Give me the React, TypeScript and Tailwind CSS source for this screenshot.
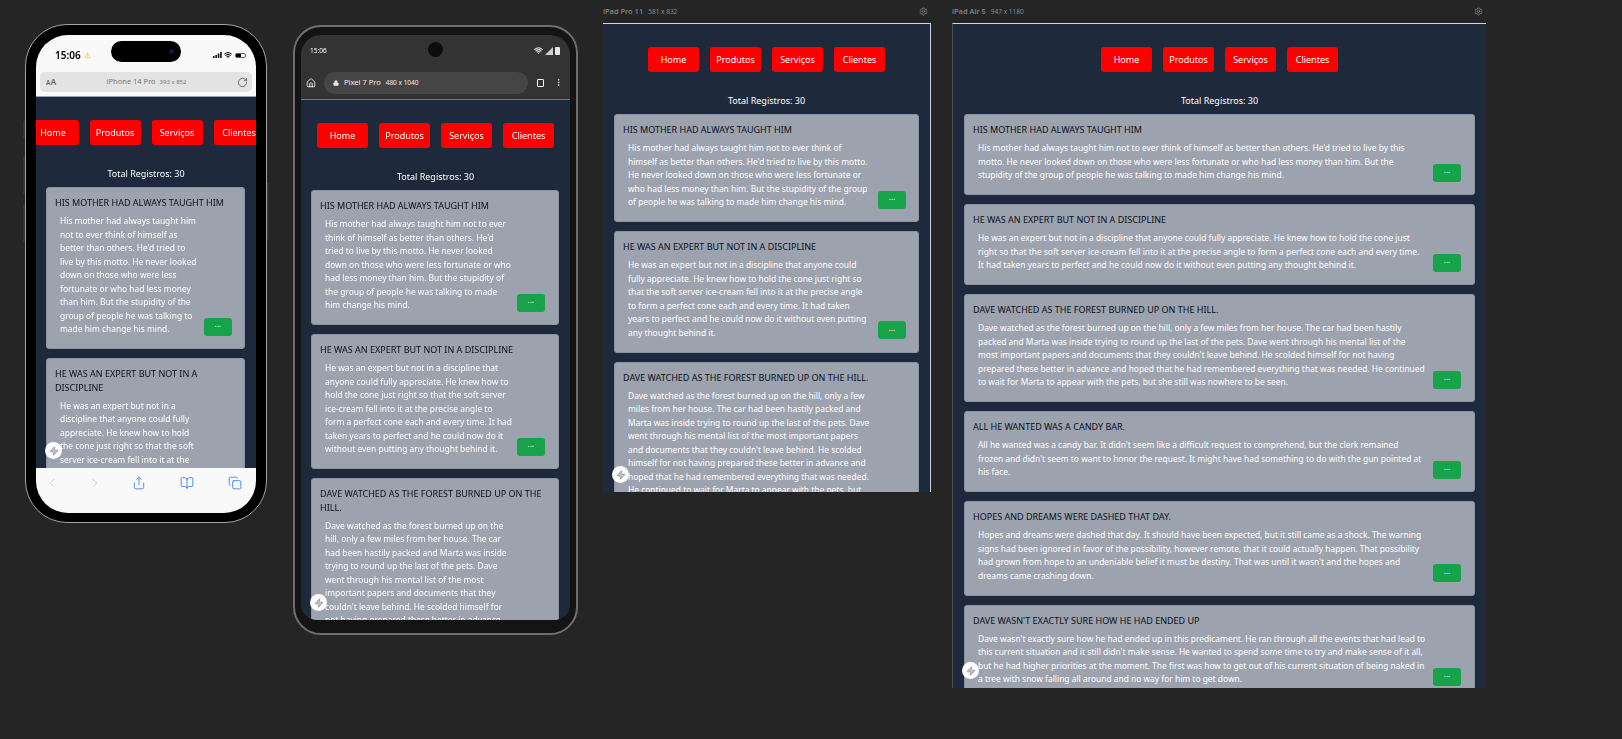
import { BookOpen, ChevronLeft, ChevronRight, Copy, Home, Lock, MoreVertical, RotateCw, Settings, Share, Wifi, Zap } from "lucide-react";
import { clsx } from "clsx";

const posts = [
  {
    title: "His mother had always taught him",
    body: "His mother had always taught him not to ever think of himself as better than others. He'd tried to live by this motto. He never looked down on those who were less fortunate or who had less money than him. But the stupidity of the group of people he was talking to made him change his mind.",
  },
  {
    title: "He was an expert but not in a discipline",
    body: "He was an expert but not in a discipline that anyone could fully appreciate. He knew how to hold the cone just right so that the soft server ice-cream fell into it at the precise angle to form a perfect cone each and every time. It had taken years to perfect and he could now do it without even putting any thought behind it.",
  },
  {
    title: "Dave watched as the forest burned up on the hill.",
    body: "Dave watched as the forest burned up on the hill, only a few miles from her house. The car had been hastily packed and Marta was inside trying to round up the last of the pets. Dave went through his mental list of the most important papers and documents that they couldn't leave behind. He scolded himself for not having prepared these better in advance and hoped that he had remembered everything that was needed. He continued to wait for Marta to appear with the pets, but she still was nowhere to be seen.",
  },
  {
    title: "All he wanted was a candy bar.",
    body: "All he wanted was a candy bar. It didn't seem like a difficult request to comprehend, but the clerk remained\n frozen and didn't seem to want to honor the request. It might have had something to do with the gun pointed at his face.",
  },
  {
    title: "Hopes and dreams were dashed that day.",
    body: "Hopes and dreams were dashed that day. It should have been expected, but it still came as a shock. The warning signs had been ignored in favor of the possibility, however remote, that it could actually happen. That possibility had grown from hope to an undeniable belief it must be destiny. That was until it wasn't and the hopes and dreams came crashing down.",
  },
  {
    title: "Dave wasn't exactly sure how he had ended up",
    body: "Dave wasn't exactly sure how he had ended up in this predicament. He ran through all the events that had lead to this current situation and it still didn't make sense. He wanted to spend some time to try and make sense of it all, but he had higher priorities at the moment. The first was how to get out of his current situation of being naked in a tree with snow falling all around and no way for him to get down.",
  },
];

const links = ["Home", "Produtos", "Serviços", "Clientes"];

function Site({ count, className, pad, cardPad, rowGap }: { count: number; className?: string; pad: string; cardPad: string; rowGap: string }) {
  return (
    <div className={clsx("relative overflow-hidden bg-[#1e293b] font-['Noto_Sans',sans-serif] text-[8.42px] leading-[13.5px]", className)}>
      <div className="flex justify-center gap-[11px] pt-[23px]">
        {links.map((l) => (
          <a key={l} className="flex h-[25px] w-[51px] shrink-0 items-center justify-center rounded-[3px] bg-[#ff0000] text-[9px] text-white">
            {l}
          </a>
        ))}
      </div>
      <p className="mt-[21.5px] text-center text-[9px] text-white">Total Registros: 30</p>
      <div className={clsx("mt-[7px] flex flex-col gap-[9px]", pad)}>
        {posts.slice(0, count).map((p) => (
          <div key={p.title} className={clsx("rounded-[3px] border border-[#8a93a3] bg-[#9ca3af] pt-[8px] pb-[12.5px] pl-[8px]", cardPad)}>
            <h2 className="text-[9px] leading-[13.5px] text-[#0b0f19] uppercase">{p.title}</h2>
            <div className={clsx("mt-[4.5px] flex items-end", rowGap)}>
              <p className="min-w-0 flex-1 pl-[5px] whitespace-pre-line text-white">{p.body.replace("\n ", "\n")}</p>
              <button className="h-[18px] w-[28px] shrink-0 rounded-[3px] bg-[#16a34a] pb-[5px] text-[8px] leading-none text-white">
                ...
              </button>
            </div>
          </div>
        ))}
      </div>
      <span className="absolute bottom-[9px] left-[9px] flex h-[17px] w-[17px] items-center justify-center rounded-full bg-white">
        <Zap size={10} className="text-[#8a8f99]" fill="#c4c7cd" />
      </span>
    </div>
  );
}

function SignalBars({ className }: { className: string }) {
  return (
    <svg width="9" height="6" viewBox="0 0 9 6" className={className}>
      <rect x="0" y="4" width="1.5" height="2" />
      <rect x="2.4" y="3" width="1.5" height="3" />
      <rect x="4.8" y="1.5" width="1.5" height="4.5" />
      <rect x="7.2" y="0" width="1.5" height="6" />
    </svg>
  );
}

function IPhone() {
  return (
    <div className="relative mt-[24px] h-[499px] w-[242px] shrink-0 rounded-[42px] border border-[#a3a3a3] bg-black p-[10px] blur-[0.5px]">
      <span className="absolute top-[96px] -left-[3px] h-[17px] w-[2px] bg-[#333]" />
      <span className="absolute top-[132px] -left-[3px] h-[37px] w-[2px] bg-[#333]" />
      <span className="absolute top-[180px] -left-[3px] h-[37px] w-[2px] bg-[#333]" />
      <span className="absolute top-[158px] -right-[3px] h-[57px] w-[2px] bg-[#333]" />
      <div className="flex h-[478px] w-[220px] flex-col overflow-hidden rounded-[32px] bg-[#f9f9fa]">
        <div className="relative flex h-[37px] shrink-0 items-center justify-between pt-[3px] pr-[10px] pl-[19px] font-['Noto_Sans',sans-serif]">
          <span className="flex items-center gap-[3px] text-[10px] font-semibold text-black">
            15:06
            <span className="text-[8px] text-[#f5d36b]">⚠</span>
          </span>
          <span className="absolute top-[6px] left-[75px] h-[21px] w-[70px] rounded-full bg-black">
            <span className="absolute top-[8px] right-[7px] h-[5px] w-[5px] rounded-full bg-[#101a3a]" />
          </span>
          <span className="flex items-center gap-[2px]">
            <SignalBars className="fill-black" />
            <Wifi size={8} className="text-black" strokeWidth={3} />
            <span className="ml-[1px] flex h-[5px] w-[11px] rounded-[2px] border border-black/60">
              <span className="h-full w-[5px] bg-black" />
            </span>
          </span>
        </div>
        <div className="flex h-[24px] shrink-0 items-start px-[4px]">
          <div className="flex h-[20px] flex-1 items-center justify-between rounded-[5px] bg-[#e3e3e3] pr-[4px] pl-[6px] font-['Noto_Sans',sans-serif] text-[#777]">
            <span className="text-[8.5px] font-semibold text-[#666]">
              <span className="text-[6.5px]">A</span>A
            </span>
            <span className="text-[7.5px]">
              iPhone 14 Pro <span className="ml-[2px] text-[6px]">393 x 852</span>
            </span>
            <RotateCw size={11} className="text-[#666]" />
          </div>
        </div>
        <Site count={2} pad="pr-[11px] pl-[10px]" cardPad="pr-[12px]" rowGap="gap-[6px]" className="h-[372px] shrink-0 border-t border-[#94a3b8]" />
        <div className="flex flex-1 items-start pt-[8px] pl-[9px]">
          <ChevronLeft size={14} strokeWidth={1.5} className="text-[#c8c8c8]" />
          <ChevronRight size={14} strokeWidth={1.5} className="ml-[29px] text-[#c8c8c8]" />
          <Share size={14} strokeWidth={1.5} className="ml-[30px] text-[#3b82f6]" />
          <BookOpen size={14} strokeWidth={1.5} className="ml-[34px] text-[#3b82f6]" />
          <Copy size={14} strokeWidth={1.5} className="ml-[34px] text-[#3b82f6]" />
        </div>
      </div>
    </div>
  );
}

function Pixel() {
  return (
    <div className="relative mt-[25px] ml-[26px] h-[610px] w-[285px] shrink-0 rounded-[28px] border-[2px] border-[#6f6f6f] bg-[#141414] px-[6px] pt-[8px] pb-[13px] blur-[0.5px]">
      <div className="flex h-[585px] flex-col overflow-hidden rounded-t-[20px] rounded-b-[16px] bg-[#333] font-['Noto_Sans',sans-serif]">
        <div className="relative flex h-[31px] shrink-0 items-center justify-between pr-[10px] pl-[9px] text-white">
          <span className="text-[6.5px]">15:06</span>
          <span className="absolute top-[7px] left-[127px] h-[15px] w-[15px] rounded-full bg-[#0d0d0d]" />
          <span className="flex items-center gap-[2px]">
            <Wifi size={9} strokeWidth={3} className="text-[#e5e5e5]" />
            <span className="h-0 w-0 border-b-[8px] border-l-[8px] border-b-[#cfcfcf] border-l-transparent" />
            <span className="h-[8px] w-[5px] rounded-[1px] bg-[#e5e5e5]" />
          </span>
        </div>
        <div className="flex h-[33px] shrink-0 items-center justify-between pr-[7px] pl-[5px]">
          <Home size={10} className="text-white" />
          <div className="ml-[8px] flex h-[22px] flex-1 items-center gap-[3px] rounded-full bg-[#454545] pl-[9px] text-[7.5px] text-[#eee]">
            <Lock size={6} fill="#eee" />
            <span className="ml-[2px]">Pixel 7 Pro</span>
            <span className="ml-[2px] text-[6.5px]">480 x 1040</span>
          </div>
          <span className="mr-[10px] ml-[9px] h-[8px] w-[7px] rounded-[1px] border border-white" />
          <MoreVertical size={9} className="text-white" />
        </div>
        <Site count={3} pad="pr-[11px] pl-[10px]" cardPad="pr-[13px]" rowGap="gap-[5px]" className="flex-1 border-t border-[#64748b]" />
      </div>
    </div>
  );
}

function Tablet({ name, size, count, width, siteClass, className, cardPad, rowGap }: { name: string; size: string; count: number; width: string; siteClass: string; className: string; cardPad: string; rowGap: string }) {
  return (
    <div className={clsx("shrink-0 font-['Noto_Sans',sans-serif]", width, className)}>
      <div className="flex h-[23px] items-center justify-between pr-[3px] text-[6.5px] text-[#8b8b8b]">
        <span>
          <span className="text-[7.5px] font-medium">{name}</span>
          <span className="ml-[5px]">{size}</span>
        </span>
        <Settings size={9} />
      </div>
      <Site count={count} pad="px-[11px]" cardPad={cardPad} rowGap={rowGap} className={clsx("border-t border-t-[#d1d5db]", siteClass)} />
    </div>
  );
}

export default function App() {
  return (
    <div className="flex h-screen items-start overflow-hidden bg-[#252526] pl-[25px]">
      <IPhone />
      <Pixel />
      <Tablet name="iPad Pro 11" size="581 x 832" count={3} width="w-[328px]" cardPad="pr-[12px]" rowGap="gap-[6px]" siteClass="h-[469px] border-r border-r-[#cbd5e1]" className="ml-[25px]" />
      <Tablet name="iPad Air 5" size="947 x 1180" count={6} width="w-[534px]" cardPad="pr-[13px]" rowGap="gap-[7px]" siteClass="h-[665px] border-l border-l-[#4a4f57]" className="ml-[21px]" />
    </div>
  );
}
